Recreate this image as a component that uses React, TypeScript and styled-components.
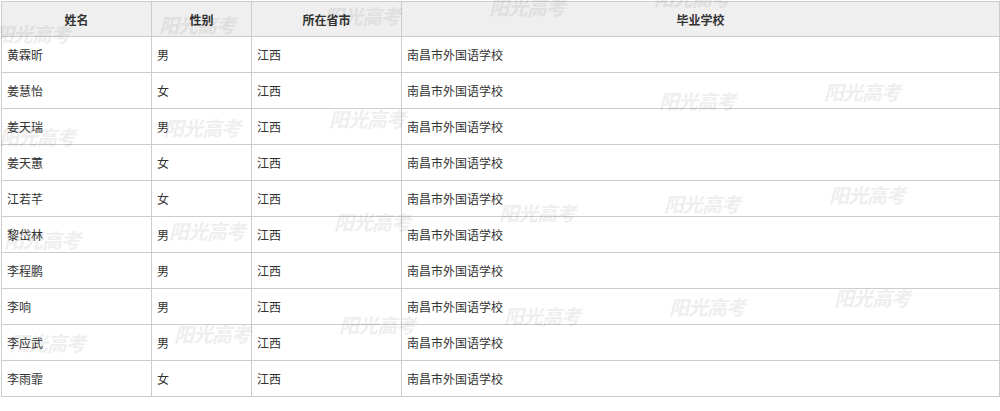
import React from 'react';
import styled, { createGlobalStyle } from 'styled-components';

const GlobalStyle = createGlobalStyle`
  html, body {
    margin: 0;
    padding: 0;
    background: #fff;
  }
  body {
    font-family: "Noto Sans CJK SC", "Liberation Sans", sans-serif;
    font-size: 12px;
    color: #333;
  }
`;

const Page = styled.div`
  position: relative;
  width: 1000px;
  height: 411px;
  overflow: hidden;
  padding: 1px 0 0 1px;
  box-sizing: border-box;
`;

const Table = styled.table`
  width: 999px;
  border-collapse: collapse;
  table-layout: fixed;
  border: 1px solid #ccc;
`;

const HeadCell = styled.th`
  height: 34px;
  padding: 0;
  background: #efefef;
  border: 1px solid #ccc;
  font-weight: bold;
  font-size: 12px;
  color: #333;
  text-align: center;
  vertical-align: middle;
`;

const Cell = styled.td`
  height: 35px;
  padding: 0 0 0 5px;
  border: 1px solid #ccc;
  font-size: 12px;
  color: #333;
  text-align: left;
  vertical-align: middle;
  white-space: nowrap;
`;

const Watermarks = styled.div`
  position: absolute;
  inset: 0;
  pointer-events: none;
`;

const Mark = styled.span`
  position: absolute;
  font-family: "Noto Sans CJK SC", sans-serif;
  font-size: 20px;
  font-weight: 900;
  font-style: italic;
  letter-spacing: -1px;
  line-height: 20px;
  color: rgba(0, 0, 0, 0.075);
  white-space: nowrap;
`;

const rows: [string, string, string, string][] = [
  ['黄霖昕', '男', '江西', '南昌市外国语学校'],
  ['姜慧怡', '女', '江西', '南昌市外国语学校'],
  ['姜天瑞', '男', '江西', '南昌市外国语学校'],
  ['姜天蕙', '女', '江西', '南昌市外国语学校'],
  ['江若芊', '女', '江西', '南昌市外国语学校'],
  ['黎岱林', '男', '江西', '南昌市外国语学校'],
  ['李程鹏', '男', '江西', '南昌市外国语学校'],
  ['李响', '男', '江西', '南昌市外国语学校'],
  ['李应武', '男', '江西', '南昌市外国语学校'],
  ['李雨霏', '女', '江西', '南昌市外国语学校'],
];

// watermark grid, tilted upward to the right; one spot is empty in the source
const marks: { left: number; top: number }[] = [];
for (let j = 0; j < 4; j++) {
  for (let i = 0; i < 6; i++) {
    if (j === 1 && i === 3) continue;
    marks.push({ left: -6 + j * 5 + i * 165, top: 24 + j * 103 - i * 9 });
  }
}

export default function App() {
  return (
    <Page>
      <GlobalStyle />
      <Table>
        <colgroup>
          <col style={{ width: 150 }} />
          <col style={{ width: 100 }} />
          <col style={{ width: 150 }} />
          <col />
        </colgroup>
        <thead>
          <tr>
            <HeadCell>姓名</HeadCell>
            <HeadCell>性别</HeadCell>
            <HeadCell>所在省市</HeadCell>
            <HeadCell>毕业学校</HeadCell>
          </tr>
        </thead>
        <tbody>
          {rows.map((r) => (
            <tr key={r[0]}>
              {r.map((c, k) => (
                <Cell key={k}>{c}</Cell>
              ))}
            </tr>
          ))}
        </tbody>
      </Table>
      <Watermarks>
        {marks.map((m, k) => (
          <Mark key={k} style={{ left: m.left, top: m.top }}>
            阳光高考
          </Mark>
        ))}
      </Watermarks>
    </Page>
  );
}
